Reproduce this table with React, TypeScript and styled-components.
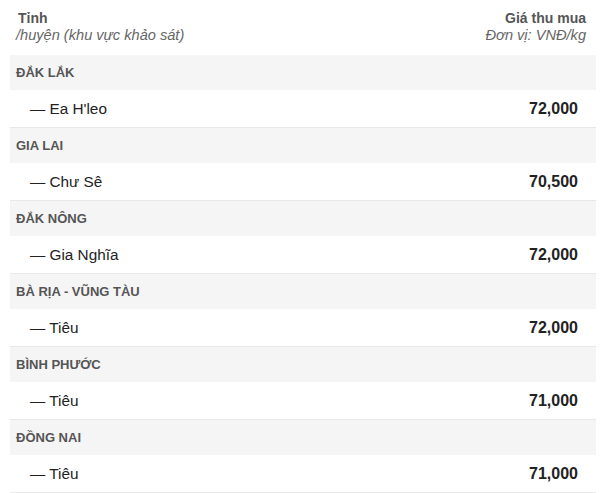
import React from "react";
import styled, { createGlobalStyle } from "styled-components";

const Global = createGlobalStyle`
  html, body { margin: 0; padding: 0; background: #fff; }
  body { font-family: "Liberation Sans", Arial, sans-serif; }
`;

const Wrap = styled.div`
  width: 586px;
  margin-left: 10px;
`;

const Header = styled.div`
  height: 55px;
  box-sizing: border-box;
  display: flex;
  justify-content: space-between;
  padding: 10px 10px 0 6px;
`;

const HeadCol = styled.div<{ $right?: boolean }>`
  display: flex;
  flex-direction: column;
  align-items: ${(p) => (p.$right ? "flex-end" : "flex-start")};
`;

const HeadTitle = styled.span`
  font-weight: bold;
  font-size: 14px;
  line-height: 17px;
  color: #555;
  padding-left: 2px;
`;

const HeadSub = styled.span`
  font-style: italic;
  font-size: 14.6px;
  line-height: 17px;
  color: #666;
`;

const GroupRow = styled.div`
  height: 35px;
  background: #f5f5f5;
  display: flex;
  align-items: center;
  padding-left: 6px;
  font-size: 13px;
  font-weight: bold;
  color: #555;
`;

const ItemRow = styled.div`
  height: 38px;
  box-sizing: border-box;
  border-bottom: 1px solid #e8e8e8;
  display: flex;
  align-items: center;
  justify-content: space-between;
  padding: 1px 18px 0 20px;
  color: #222;
`;

const ItemName = styled.span`
  font-size: 15.3px;
`;

const Price = styled.span`
  font-size: 16px;
  font-weight: bold;
  color: #222;
`;

const data = [
  { group: "ĐẮK LẮK", name: "Ea H'leo", price: "72,000" },
  { group: "GIA LAI", name: "Chư Sê", price: "70,500" },
  { group: "ĐẮK NÔNG", name: "Gia Nghĩa", price: "72,000" },
  { group: "BÀ RỊA - VŨNG TÀU", name: "Tiêu", price: "72,000" },
  { group: "BÌNH PHƯỚC", name: "Tiêu", price: "71,000" },
  { group: "ĐỒNG NAI", name: "Tiêu", price: "71,000" },
];

export default function App() {
  return (
    <>
      <Global />
      <Wrap>
        <Header>
          <HeadCol>
            <HeadTitle>Tỉnh</HeadTitle>
            <HeadSub>/huyện (khu vực khảo sát)</HeadSub>
          </HeadCol>
          <HeadCol $right>
            <HeadTitle>Giá thu mua</HeadTitle>
            <HeadSub>Đơn vị: VNĐ/kg</HeadSub>
          </HeadCol>
        </Header>
        {data.map((d, i) => (
          <React.Fragment key={i}>
            <GroupRow>{d.group}</GroupRow>
            <ItemRow>
              <ItemName>— {d.name}</ItemName>
              <Price>{d.price}</Price>
            </ItemRow>
          </React.Fragment>
        ))}
      </Wrap>
    </>
  );
}
